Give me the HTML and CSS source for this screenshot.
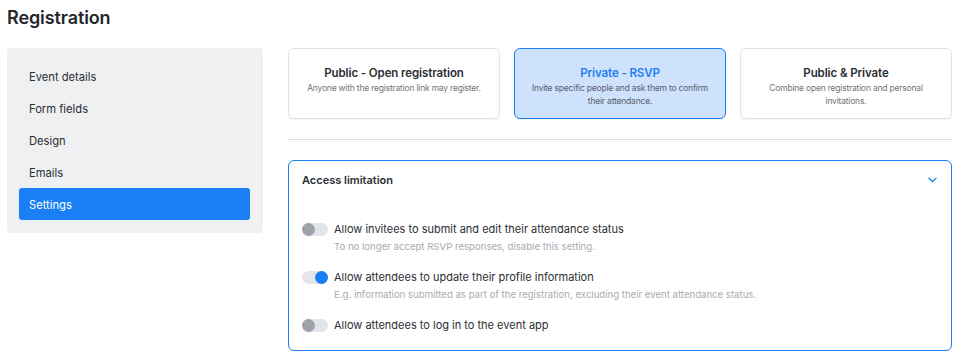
FILE: index.html
```html
<!DOCTYPE html>
<html lang="en">
<head>
<meta charset="utf-8">
<title>Registration</title>
<link rel="stylesheet" href="styles.css">
</head>
<body>
<div class="page">
  <h1 class="title">Registration</h1>
  <div class="layout">
    <nav class="sidebar">
      <a class="nav-item">Event details</a>
      <a class="nav-item">Form fields</a>
      <a class="nav-item">Design</a>
      <a class="nav-item">Emails</a>
      <a class="nav-item active">Settings</a>
    </nav>
    <main class="main">
      <div class="cards">
        <div class="card">
          <div class="card-title">Public - Open registration</div>
          <div class="card-text">Anyone with the registration link may register.</div>
        </div>
        <div class="card selected">
          <div class="card-title">Private - RSVP</div>
          <div class="card-text">Invite specific people and ask them to confirm their attendance.</div>
        </div>
        <div class="card">
          <div class="card-title">Public &amp; Private</div>
          <div class="card-text">Combine open registration and personal invitations.</div>
        </div>
      </div>
      <hr class="divider">
      <section class="panel">
        <div class="panel-head">
          <span class="panel-title">Access limitation</span>
          <svg class="chevron" width="9" height="6" viewBox="0 0 9 6"><path d="M1 1.2l3.5 3.5 3.5-3.5" fill="none" stroke="#1a7ff5" stroke-width="1.3" stroke-linecap="round" stroke-linejoin="round"/></svg>
        </div>
        <div class="panel-body">
          <div class="setting">
            <span class="toggle"><span class="knob"></span></span>
            <div class="setting-text">
              <div class="setting-label">Allow invitees to submit and edit their attendance status</div>
              <div class="setting-help">To no longer accept RSVP responses, disable this setting.</div>
            </div>
          </div>
          <div class="setting">
            <span class="toggle on"><span class="knob"></span></span>
            <div class="setting-text">
              <div class="setting-label">Allow attendees to update their profile information</div>
              <div class="setting-help">E.g. information submitted as part of the registration, excluding their event attendance status.</div>
            </div>
          </div>
          <div class="setting">
            <span class="toggle"><span class="knob"></span></span>
            <div class="setting-text">
              <div class="setting-label">Allow attendees to log in to the event app</div>
            </div>
          </div>
        </div>
      </section>
    </main>
  </div>
</div>
</body>
</html>
```

FILE: styles.css
```css
* { box-sizing: border-box; }
html, body { margin: 0; padding: 0; background: #fff; }
body {
  font-family: Inter, "Noto Sans", "Liberation Sans", sans-serif;
  color: #2b2e33;
}
.page { padding: 0 8px 0 7px; }
.title {
  margin: 0;
  padding-top: 7px;
  height: 48px;
  font-size: 18px;
  line-height: 22px;
  font-weight: 600;
  letter-spacing: -0.1px;
  color: #23262b;
}
.layout { display: flex; gap: 25px; align-items: flex-start; }
.sidebar {
  width: 256px;
  flex: none;
  background: #eef0f2;
  border-radius: 4px;
  padding: 12px 13px 13px 12px;
  display: flex;
  flex-direction: column;
}
.nav-item {
  display: block;
  height: 32px;
  padding-top: 2px;
  line-height: 30px;
  padding-left: 10px;
  font-size: 11.2px;
  color: #2b2e33;
  border-radius: 3px;
}
.nav-item.active { background: #1a7ff5; color: #fff; }
.main { flex: 1; min-width: 0; }
.cards { display: flex; gap: 14px; }
.card {
  flex: 1;
  height: 71px;
  border: 1px solid #dfe1e4;
  border-radius: 6px;
  background: #fff;
  box-shadow: 0 1px 2px rgba(0,0,0,0.06);
  text-align: center;
  padding: 16px 14px 0;
}
.card-title {
  font-size: 11.5px;
  letter-spacing: -0.1px;
  line-height: 16px;
  font-weight: 600;
  color: #2b2e33;
}
.card-text {
  margin-top: 1px;
  font-size: 8.5px;
  letter-spacing: -0.2px;
  line-height: 13px;
  color: #70747a;
}
.card.selected { background: #cfe2fb; border-color: #1a7ff5; }
.card.selected .card-title { color: #1a7ff5; }
.card.selected .card-text { color: #55606e; }
.divider {
  margin: 20px 0 20px;
  border: 0;
  border-top: 1px solid #dcdee1;
}
.panel {
  border: 1px solid #1a7ff5;
  border-radius: 6px;
  background: #fff;
  height: 191px;
}
.panel-head {
  height: 40px;
  display: flex;
  align-items: center;
  justify-content: space-between;
  padding: 0 14px 2px 13px;
}
.panel-title { font-size: 11px; font-weight: 600; color: #2b2e33; }
.chevron { margin-top: -1px; }
.panel-body {
  padding: 20px 13px 0;
  display: flex;
  flex-direction: column;
  gap: 14px;
}
.setting { display: flex; gap: 6px; align-items: flex-start; }
.toggle {
  flex: none;
  width: 26px;
  height: 13px;
  margin-top: 2px;
  border-radius: 7px;
  background: #e3e5e8;
  position: relative;
  display: block;
}
.knob {
  position: absolute;
  top: 0;
  left: 0;
  width: 13px;
  height: 13px;
  border-radius: 50%;
  background: #9da3aa;
}
.toggle.on .knob { left: 13px; background: #1a7ff5; }
.setting-label { font-size: 11px; line-height: 17px; color: #2b2e33; }
.setting-help { font-size: 9.6px; line-height: 17px; color: #a7abb1; }
```
